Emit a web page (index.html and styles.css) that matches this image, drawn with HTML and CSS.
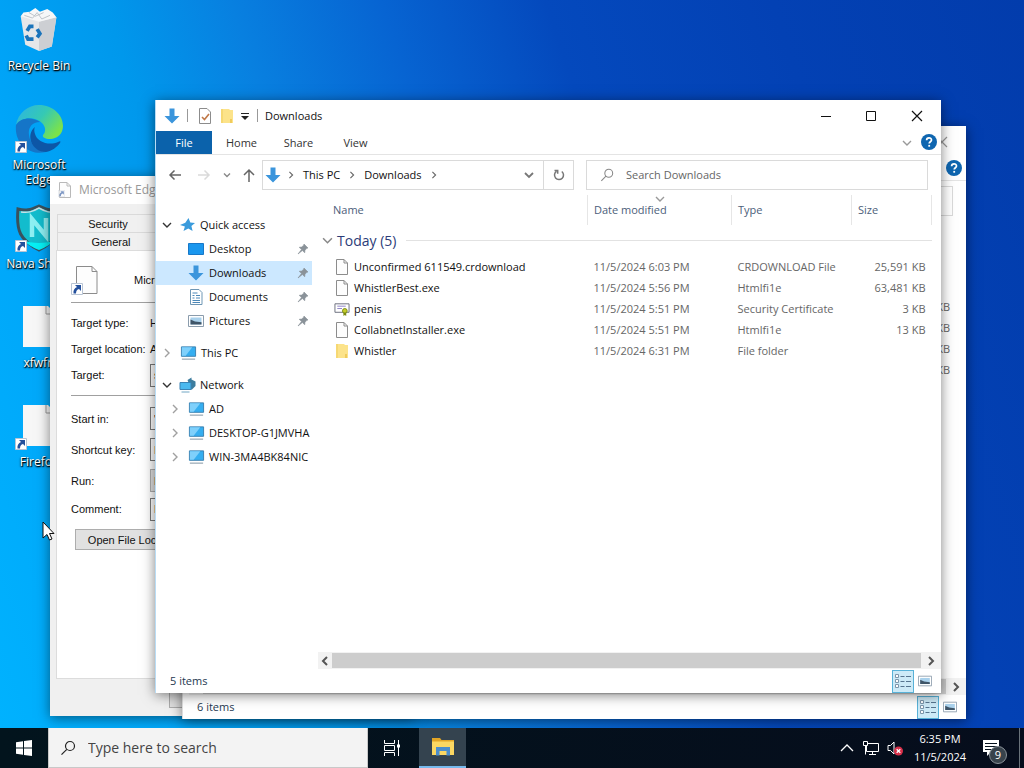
FILE: index.html
```html
<!DOCTYPE html>
<html lang="en">
<head>
<meta charset="utf-8">
<title>Desktop</title>
<link rel="stylesheet" href="styles.css">
</head>
<body>
<svg class="sprite" aria-hidden="true">
  <symbol id="i-down" viewBox="0 0 16 16"><path d="M5.5 0.5h5v7.5h5L8 15.5 0.5 8h5z" fill="#3b95dc"/></symbol>
  <symbol id="i-pc" viewBox="0 0 18 16"><path d="M1.5 1.5h15v10h-15z" fill="#35aef0" stroke="#3a7fae"/><path d="M2 2h11L6 11H2z" fill="#7fd0fb"/><path d="M2 14.500h14" stroke="#7a8f9e"/></symbol>
  <symbol id="i-file" viewBox="0 0 14 16"><path d="M1.500 .5h7.500l3.500 3.500v11.500h-11z" fill="#fdfdfd" stroke="#8c8c8c"/><path d="M9 .5v3.500h3.500" fill="none" stroke="#8c8c8c"/></symbol>
  <symbol id="i-bigfile" viewBox="0 0 24 28"><path d="M1.500 .5h15.500l5 5v22h-20.500z" fill="#fdfdfd" stroke="#8c8c8c"/><path d="M17 .5v5h5" fill="none" stroke="#8c8c8c"/></symbol>
  <symbol id="i-folder" viewBox="0 0 14 16"><path d="M1 1h8l1 1h3v13H1z" fill="#fce38a"/><path d="M1 1h2v14H1z" fill="#f6d873"/><path d="M10 11h2v4h-2z" fill="#f0cb5c"/></symbol>
  <symbol id="i-cert" viewBox="0 0 17 16"><path d="M1 2.500h15v9H1z" fill="#fff" stroke="#666b7a"/><path d="M3.500 5h9M3.500 7.500h5" stroke="#8c7fc4"/><circle cx="11.500" cy="10" r="2.500" fill="#c4cc28" stroke="#7a8a12"/><path d="M10 12v3.500l1.500-1 1.500 1V12" fill="#7a8a12"/></symbol>
  <symbol id="i-chev-r" viewBox="0 0 8 10"><path d="M2 1l4 4-4 4" fill="none" stroke="currentColor" stroke-width="1.400"/></symbol>
  <symbol id="i-chev-rb" viewBox="0 0 8 10"><path d="M2 1l4 4-4 4" fill="none" stroke="currentColor" stroke-width="2"/></symbol>
  <symbol id="i-chev-d" viewBox="0 0 10 8"><path d="M1 2l4 4 4-4" fill="none" stroke="currentColor" stroke-width="1.400"/></symbol>
  <symbol id="i-pin" viewBox="0 0 12 12"><path d="M7 1l4 4-1.200.3L8 7.300l-.3 2.500L5.400 7.500 1 11l3.500-4.400L2.200 4.300 4.700 4l2-1.800z" fill="#8a9299" stroke="#8a9299" stroke-width=".6"/></symbol>
  <symbol id="i-search" viewBox="0 0 16 16"><circle cx="10" cy="6" r="4.500" fill="none" stroke="currentColor" stroke-width="1.200"/><path d="M6.800 9.300L1.500 14.600" stroke="currentColor" stroke-width="1.200"/></symbol>
  <symbol id="i-help" viewBox="0 0 16 16"><circle cx="8" cy="8" r="8" fill="#0f66b0"/><path d="M5.600 6.200c0-3.200 4.900-3.100 4.900-.3 0 1.800-2.300 1.900-2.300 3.700" fill="none" stroke="#fff" stroke-width="1.700"/><path d="M7.300 10.900H9.100v1.800H7.300z" fill="#fff"/></symbol>
  <symbol id="i-pic" viewBox="0 0 16 14"><path d="M.5 1.500h15v11H.5z" fill="#fff" stroke="#8b9cac"/><path d="M2.500 3.500h11v7h-11z" fill="#a9d1ec"/><path d="M2.500 10.500V5.500l4.500 2 6.500.8v2.200z" fill="#3f5568"/></symbol>
  <symbol id="i-details" viewBox="0 0 16 16"><path d="M.5 1.500h3v3h-3zM.5 6.500h3v3h-3zM.5 11.500h3v3h-3z" fill="#fff" stroke="#7d96ab"/><path d="M5.500 3.500h4M11 3.500h5M5.500 8.500h4M11 8.500h5M5.500 13.500h4M11 13.500h5" stroke="#57758f"/></symbol>
  <symbol id="i-shortcut" viewBox="0 0 12 12"><path d="M.5.5h11v11H.5z" fill="#fff" stroke="#b8c4d4"/><path d="M4 2h6v6L8 6C6 6.500 5 8 5 10.500H2.500C2 7.500 3.500 5 6 4z" fill="#24509c"/></symbol>
  <symbol id="i-x" viewBox="0 0 12 12"><path d="M1 1l10 10M11 1L1 11" stroke="currentColor" stroke-width="1.200"/></symbol>
</svg>

<main class="desktop">
  <nav class="shortcuts" aria-label="Desktop shortcuts">
    <button class="shortcut">
      <svg class="shortcut-icon" viewBox="0 0 48 48"><path d="M4 9l20-5 19 6-5 32-14 5-15-7z" fill="#e6e7e9"/><path d="M24 15l19-5-5 32-14 5z" fill="#cdcfd3"/><path d="M4 9l20 6 19-5-4-5-6-4-8 3-5-4-6 4-7 1z" fill="#f6f7f8"/><path d="M8 8l9 3 5-6 5 7 9-4M13 5l7 4 9-4" fill="none" stroke="#b9bfc5"/><path d="M11 25l3-5h4M22 23l3 5-3 4M18 34h-6l-2-4" fill="none" stroke="#1b74bb" stroke-width="4"/></svg>
      <span>Recycle Bin</span>
    </button>
    <button class="shortcut">
      <svg class="shortcut-icon" viewBox="0 0 48 48">
        <defs><linearGradient id="edge-a" x1="0" x2="1" y2=".6"><stop offset="0" stop-color="#2cb3e6"/><stop offset=".55" stop-color="#35c9b4"/><stop offset="1" stop-color="#7be24b"/></linearGradient></defs>
        <path d="M1 20C3 8 13 0 24 0c14 0 24 10 24 21 0 8-6 13-13 13-5 0-8-2-7-4 3-3 3-8-1-12-7-7-21-6-26 2z" fill="url(#edge-a)"/>
        <path d="M1 20c5-8 17-8 24-3-9 0-12 7-11 13 1 9 8 16 17 17-16 4-32-8-30-27z" fill="#1575c8"/>
        <path d="M20 22c-10 8-3 25 11 25 6-1 11-5 14-9 1-2 0-2-2-1-9 4-21 0-23-8-1-3-1-5 0-7z" fill="#0d56a6"/>
      </svg>
      <svg class="overlay"><use href="#i-shortcut"/></svg>
      <span>Microsoft Edge</span>
    </button>
    <button class="shortcut">
      <svg class="shortcut-icon" viewBox="0 0 48 48"><path d="M3 5c8 2 12 1 21-3 9 4 13 5 21 3 2 22-2 31-21 41C5 36 1 27 3 5z" fill="#12bccd" stroke="#39515c" stroke-width="3"/><path d="M6 8c7 1 11 0 18-4 7 4 11 5 18 4" fill="none" stroke="#c6e3e8" stroke-width="1.500"/><path d="M8 36c5 5 9 7 16 10 7-3 11-5 16-10-9 4-23 4-32 0z" fill="#06f0f4"/><path d="M17 33V15l14 17V14" fill="none" stroke="#8deff2" stroke-width="4.500"/></svg>
      <svg class="overlay"><use href="#i-shortcut"/></svg>
      <span>Nava Shield</span>
    </button>
    <button class="shortcut">
      <svg class="shortcut-icon" viewBox="0 0 48 48"><path d="M8 3h25l7 7v34H8z" fill="#f7f7f7"/><path d="M31 3v8h8" fill="none" stroke="#999"/></svg>
      <span>xfwfn</span>
    </button>
    <button class="shortcut">
      <svg class="shortcut-icon" viewBox="0 0 48 48"><path d="M8 3h25l7 7v34H8z" fill="#f7f7f7"/><path d="M31 3v8h8" fill="none" stroke="#999"/></svg>
      <svg class="overlay"><use href="#i-shortcut"/></svg>
      <span>Firefox</span>
    </button>
  </nav>

  <section class="window dialog" aria-label="Microsoft Edge Properties">
    <header class="dialog-title"><svg class="ic16"><use href="#i-file"/></svg><svg class="mini"><use href="#i-shortcut"/></svg><span>Microsoft Edge Properties</span></header>
    <div class="tabs"><button>Security</button><button>Details</button></div>
    <div class="tabs"><button>General</button><button>Shortcut</button></div>
    <form class="sheet">
      <div class="sheet-head"><svg class="big-file"><use href="#i-bigfile"/></svg><svg class="overlay"><use href="#i-shortcut"/></svg><span>Microsoft Edge</span></div>
      <div class="field"><span>Target type:</span><span>HTML</span></div>
      <div class="field"><span>Target location:</span><span>Application</span></div>
      <div class="field"><label for="f1">Target:</label><input id="f1" value="sheet"></div>
      <hr>
      <div class="field gap"><label for="f2">Start in:</label><input id="f2" value="&quot;C:\"></div>
      <div class="field gap"><label for="f3">Shortcut key:</label><input id="f3" value="None"></div>
      <div class="field gap"><label for="f4">Run:</label><select id="f4"><option>Normal window</option></select></div>
      <div class="field"><label for="f5">Comment:</label><input id="f5" value="Browse the web"></div>
      <button type="button" class="classic">Open File Location</button>
    </form>
    <footer class="dialog-foot"><button class="classic">OK</button></footer>
  </section>

  <section class="window explorer back" aria-label="File Explorer">
    <header class="titlebar"><span class="grow"></span><button class="cap" aria-label="Close"><svg><use href="#i-x"/></svg></button></header>
    <div class="ribbon"><span class="grow"></span><button class="help" aria-label="Help"><svg><use href="#i-help"/></svg></button></div>
    <div class="address-row"><span></span><span></span><input class="search-box" aria-label="Search"></div>
    <div class="body">
      <div class="list">
        <table class="back-table">
          <tbody>
            <tr><td>1 KB</td></tr><tr><td>1 KB</td></tr><tr><td>1 KB</td></tr><tr><td>1 KB</td></tr>
          </tbody>
        </table>
        <div class="hscroll"><button aria-label="Scroll left"><svg class="flip"><use href="#i-chev-rb"/></svg></button><div class="thumb"></div><button aria-label="Scroll right"><svg><use href="#i-chev-rb"/></svg></button></div>
      </div>
    </div>
    <footer class="status"><span>6 items</span><span class="grow"></span><button class="view on" aria-label="Details"><svg><use href="#i-details"/></svg></button><button class="view" aria-label="Large icons"><svg><use href="#i-pic"/></svg></button></footer>
  </section>

  <section class="window explorer front" aria-label="Downloads">
    <header class="titlebar">
      <svg class="ic16"><use href="#i-down"/></svg><i class="bar"></i>
      <button class="quick" aria-label="Properties"><svg class="ic16" viewBox="0 0 14 16"><path d="M1.500.5H9L12.500 4v11.500h-11z" fill="#fff" stroke="#8c8c8c"/><path d="M4 9l2.500 2.500L11 6" fill="none" stroke="#c07848" stroke-width="1.600"/></svg></button>
      <button class="quick" aria-label="New folder"><svg class="ic16"><use href="#i-folder"/></svg></button>
      <button class="drop" aria-label="Customize"><svg viewBox="0 0 8 8"><path d="M0 1.500h8" stroke="#222"/><path d="M0 4h8L4 8z" fill="#222"/></svg></button>
      <i class="bar"></i>
      <h1>Downloads</h1>
      <span class="grow"></span>
      <button class="cap" aria-label="Minimize"><svg viewBox="0 0 12 12"><path d="M1 6.500h10" stroke="#111"/></svg></button>
      <button class="cap" aria-label="Maximize"><svg viewBox="0 0 12 12"><path d="M1.500 1.500h9v9h-9z" fill="none" stroke="#111"/></svg></button>
      <button class="cap" aria-label="Close"><svg><use href="#i-x"/></svg></button>
    </header>
    <div class="ribbon">
      <button class="tab file">File</button><button class="tab">Home</button><button class="tab">Share</button><button class="tab">View</button>
      <span class="grow"></span>
      <button class="expand" aria-label="Expand ribbon"><svg><use href="#i-chev-d"/></svg></button>
      <button class="help" aria-label="Help"><svg><use href="#i-help"/></svg></button>
    </div>
    <div class="address-row">
      <div class="nav-buttons">
        <button aria-label="Back"><svg viewBox="0 0 14 14"><path d="M13 7H2M6.500 2.500L2 7l4.500 4.500" fill="none" stroke="#666" stroke-width="1.500"/></svg></button>
        <button aria-label="Forward" disabled><svg viewBox="0 0 14 14"><path d="M1 7h11M7.500 2.500L12 7l-4.500 4.500" fill="none" stroke="#dadada" stroke-width="1.500"/></svg></button>
        <button class="recent" aria-label="Recent"><svg viewBox="0 0 10 8"><path d="M2 2.500l3 3 3-3" fill="none" stroke="#888" stroke-width="1.400"/></svg></button>
        <button aria-label="Up"><svg viewBox="0 0 14 14"><path d="M7 14V2M2 7l5-5 5 5" fill="none" stroke="#666" stroke-width="1.500"/></svg></button>
      </div>
      <div class="address">
        <svg class="ic16"><use href="#i-down"/></svg>
        <svg class="sep"><use href="#i-chev-r"/></svg><a href="#pc">This PC</a>
        <svg class="sep"><use href="#i-chev-r"/></svg><a href="#downloads">Downloads</a>
        <svg class="sep"><use href="#i-chev-r"/></svg><span class="grow"></span>
        <button class="hist" aria-label="Previous locations"><svg viewBox="0 0 10 8"><path d="M1 2l4 4 4-4" fill="none" stroke="#777" stroke-width="1.800"/></svg></button>
        <button class="refresh" aria-label="Refresh"><svg viewBox="0 0 12 12"><path d="M8.800 2.500A4.500 4.500 0 1 1 3.500 2.300M1.500 1.500h3.200v3.200" fill="none" stroke="#777" stroke-width="1.500"/></svg></button>
      </div>
      <label class="search-box"><svg><use href="#i-search"/></svg><input type="text" placeholder="Search Downloads" aria-label="Search Downloads"></label>
    </div>
    <div class="body">
      <nav class="tree" aria-label="Folders">
        <ul>
          <li><a href="#q" class="root"><svg class="tw dark"><use href="#i-chev-d"/></svg><svg class="ic16" viewBox="0 0 16 16"><path d="M9 1l1.800 4.500 4.700.4-3.600 3.200 1.200 5L8.800 11.500 4 14l1.400-4.600L.5 8l5.300-2.200z" fill="#3a9bdc"/></svg>Quick access</a></li>
          <li><a href="#a" class="leaf"><svg class="ic16" viewBox="0 0 16 16"><path d="M.5 2.500h15v11H.5z" fill="#1a97ee" stroke="#1878c8"/></svg><span>Desktop</span><svg class="pin"><use href="#i-pin"/></svg></a></li>
          <li><a href="#b" class="leaf on"><svg class="ic16"><use href="#i-down"/></svg><span>Downloads</span><svg class="pin"><use href="#i-pin"/></svg></a></li>
          <li><a href="#c" class="leaf"><svg class="ic16" viewBox="0 0 16 16"><path d="M2.500.5h8.500l3 3v12H2.500z" fill="#fff" stroke="#6f97b5"/><path d="M4.500 4h5M4.500 6.500h2M8 6.500h4M4.500 9h2M8 9h4M4.500 11.500h7.500M4.500 13.500h7.500" stroke="#4c88b8"/></svg><span>Documents</span><svg class="pin"><use href="#i-pin"/></svg></a></li>
          <li><a href="#d" class="leaf"><svg class="ic16"><use href="#i-pic"/></svg><span>Pictures</span><svg class="pin"><use href="#i-pin"/></svg></a></li>
        </ul>
        <ul><li><a href="#e" class="root"><svg class="tw"><use href="#i-chev-r"/></svg><svg class="ic16"><use href="#i-pc"/></svg>This PC</a></li></ul>
        <ul>
          <li><a href="#f" class="root"><svg class="tw dark"><use href="#i-chev-d"/></svg><svg class="ic16" viewBox="0 0 16 16"><path d="M8 3l4-2.500V2.500l4 2V9l-4 4z" fill="#3d7d9e"/><path d="M.5 5.500h11v7H.5z" fill="#4ab9ef" stroke="#3a83b4"/><path d="M2 15h8" stroke="#71a6c4"/></svg>Network</a></li>
          <li><a href="#g" class="root sub"><svg class="tw"><use href="#i-chev-r"/></svg><svg class="ic16"><use href="#i-pc"/></svg>AD</a></li>
          <li><a href="#h" class="root sub"><svg class="tw"><use href="#i-chev-r"/></svg><svg class="ic16"><use href="#i-pc"/></svg>DESKTOP-G1JMVHA</a></li>
          <li><a href="#i" class="root sub"><svg class="tw"><use href="#i-chev-r"/></svg><svg class="ic16"><use href="#i-pc"/></svg>WIN-3MA4BK84NIC</a></li>
        </ul>
      </nav>
      <div class="list">
        <table class="files">
          <colgroup><col><col class="c-date"><col class="c-type"><col class="c-size"></colgroup>
          <thead><tr><th>Name</th><th>Date modified<svg class="sort"><use href="#i-chev-d"/></svg></th><th>Type</th><th>Size</th></tr></thead>
          <tbody>
            <tr class="group"><th colspan="4"><div><svg><use href="#i-chev-d"/></svg><span>Today (5)</span><i></i></div></th></tr>
            <tr><td><svg class="ic16"><use href="#i-file"/></svg>Unconfirmed 611549.crdownload</td><td>11/5/2024 6:03 PM</td><td>CRDOWNLOAD File</td><td>25,591 KB</td></tr>
            <tr><td><svg class="ic16"><use href="#i-file"/></svg>WhistlerBest.exe</td><td>11/5/2024 5:56 PM</td><td>Htmlfi1e</td><td>63,481 KB</td></tr>
            <tr><td><svg class="ic16"><use href="#i-cert"/></svg>penis</td><td>11/5/2024 5:51 PM</td><td>Security Certificate</td><td>3 KB</td></tr>
            <tr><td><svg class="ic16"><use href="#i-file"/></svg>CollabnetInstaller.exe</td><td>11/5/2024 5:51 PM</td><td>Htmlfi1e</td><td>13 KB</td></tr>
            <tr><td><svg class="ic16"><use href="#i-folder"/></svg>Whistler</td><td>11/5/2024 6:31 PM</td><td>File folder</td><td></td></tr>
          </tbody>
        </table>
        <div class="hscroll"><button aria-label="Scroll left"><svg class="flip"><use href="#i-chev-rb"/></svg></button><div class="thumb"></div><button aria-label="Scroll right"><svg><use href="#i-chev-rb"/></svg></button></div>
      </div>
    </div>
    <footer class="status"><span>5 items</span><span class="grow"></span><button class="view on" aria-label="Details"><svg><use href="#i-details"/></svg></button><button class="view" aria-label="Large icons"><svg><use href="#i-pic"/></svg></button></footer>
  </section>

  <svg class="cursor" viewBox="0 0 13 20"><path d="M1 1v16l4-3.500L7.500 19l2.500-1-2.500-5.500H12z" fill="#fff" stroke="#111"/></svg>
</main>

<footer class="taskbar">
  <button class="start" aria-label="Start"><svg viewBox="0 0 16 16"><path d="M0 2.200L7 1.200v6.300H0zM8 1.100L16 0v7.500H8zM0 8.500h7v6.300l-7-1zM8 8.500h8V16l-8-1.100z" fill="#fff"/></svg></button>
  <label class="task-search"><svg><use href="#i-search"/></svg><input type="text" placeholder="Type here to search" aria-label="Type here to search"></label>
  <button class="task" aria-label="Task view"><svg viewBox="0 0 18 18"><path d="M1.500 1v3.500h10V1M1.500 6.500h10v5h-10zM1.500 17v-3.500h10V17M15.500 1v16" fill="none" stroke="#fff"/><path d="M14 5.500h3v3h-3z" fill="#fff"/></svg></button>
  <button class="task active" aria-label="File Explorer"><svg class="explorer-icon" viewBox="0 0 22 18"><path d="M0 0h8l1.500 2H22v5H0z" fill="#e2a526"/><path d="M0 3.500h22V17H0z" fill="#fbd762"/><path d="M4 9h14v8.500h-3.500V13h-7v4.500H4z" fill="#4b8dcb"/></svg></button>
  <span class="grow"></span>
  <div class="tray">
    <button aria-label="Show hidden icons"><svg viewBox="0 0 16 16"><path d="M2 11l6-6 6 6" fill="none" stroke="#fff" stroke-width="1.300"/></svg></button>
    <button aria-label="Network"><svg viewBox="0 0 16 16"><path d="M4 3.500h11.500v8H3.500V6M9.500 11.500v3M6 14.500h7M.5 1.500h4v4h-4zM2.500 5.500v9" fill="none" stroke="#fff"/></svg></button>
    <button class="vol" aria-label="Volume muted"><svg viewBox="0 0 16 16"><path d="M1 5.500h2.500L7 2v12L3.500 10.500H1z" fill="none" stroke="#fff"/><circle cx="11.500" cy="11" r="4.500" fill="#d8304a"/><path d="M9.700 9.200l3.600 3.600M13.300 9.200l-3.600 3.600" stroke="#fff" stroke-width="1.300"/></svg></button>
  </div>
  <time class="clock"><span>6:35 PM</span><span>11/5/2024</span></time>
  <button class="notify" aria-label="Notifications"><svg viewBox="0 0 18 18"><path d="M1 1h16v12H9l-4 4v-4H1z" fill="#fff"/><path d="M3 4.500h12M3 7.500h12M3 10.500h7" stroke="#06121e"/></svg><span class="badge">9</span></button>
  <i class="peek"></i>
</footer>
</body>
</html>
```

FILE: styles.css
```css
* { box-sizing: border-box; }
html, body { height: 100%; }
body {
  margin: 0;
  display: flex;
  flex-direction: column;
  overflow: hidden;
  font: 11px/16px "Open Sans", "Noto Sans", sans-serif;
  color: #111;
}
button, input, select { font: inherit; color: inherit; border: 0; background: none; padding: 0; margin: 0; border-radius: 0; }
svg { display: block; flex: none; }
a { color: inherit; text-decoration: none; }
ul { list-style: none; margin: 0; padding: 0; }
.sprite { position: absolute; width: 0; height: 0; }
.grow { flex: 1; }
.ic16 { width: 16px; height: 16px; }

.desktop {
  position: relative;
  flex: 1;
  min-height: 0;
  overflow: hidden;
  background: linear-gradient(72deg, #00b2fe 0%, #00a6f9 15%, #0098ec 27%, #0880e0 37%, #0764d2 49%, #0449bd 62%, #0341b4 80%, #023cac 100%);
}

.shortcuts { display: flex; flex-direction: column; width: 78px; padding-top: 6px; }
.shortcut { position: relative; height: 99px; display: flex; flex-direction: column; align-items: center; gap: 4px; color: #fff; font-size: 12px; line-height: 15px; text-shadow: 1px 1px 1px #000, 0 1px 2px #000; }
.shortcut-icon { width: 48px; height: 48px; }
.overlay { position: absolute; left: 15px; top: 36px; width: 12px; height: 12px; }
.shortcut:first-child .shortcut-icon { width: 44px; }

.window { position: absolute; display: flex; flex-direction: column; background: #fff; box-shadow: 0 2px 12px rgba(0, 0, 0, .5); }
.front { inset: 100px 83px 35px 155px; }
.back { inset: 126px 58px 9px 182px; }

/* Properties dialog */
.dialog { left: 50px; top: 176px; bottom: 12px; width: 364px; padding: 0 6px; background: #f0f0f0; font: 11px/14px "Liberation Sans", Arial, sans-serif; }
.dialog-title { position: relative; display: flex; align-items: center; gap: 6px; height: 28px; margin: 0 -6px 10px; padding-left: 7px; background: #fff; color: #999; font: 12px/16px "Open Sans", sans-serif; }
.dialog-title svg { opacity: .6; }
.mini { position: absolute; left: 8px; top: 14px; width: 7px; height: 7px; }
.tabs { display: flex; height: 18px; padding-left: 1px; }
.tabs button { width: 102px; border: 1px solid #dadada; border-bottom: 0; padding-left: 0; }
.tabs + .tabs button { width: 108px; }
.sheet { flex: 1; display: flex; flex-direction: column; background: #fff; border: 1px solid #dcdcdc; padding: 10px 14px; }
.sheet-head { position: relative; display: flex; align-items: center; height: 42px; padding-bottom: 4px; margin-bottom: 7px; border-bottom: 1px solid #a0a0a0; }
.sheet-head span { margin-left: 35px; }
.sheet-head .overlay { left: 0; top: 22px; }
.big-file { width: 24px; height: 28px; margin-left: 4px; }
.field { display: flex; align-items: center; height: 26px; }
.field > :first-child { width: 79px; flex: none; }
.field input, .field select { width: 200px; height: 23px; border: 1px solid #7a7a7a; padding: 0 3px; }
.field select { background: #e1e1e1; border-color: #adadad; appearance: none; }
.sheet hr { width: 100%; margin: 7px 0; border: 0; border-top: 1px solid #a0a0a0; }
.field.gap { height: 31px; }
.classic { height: 21px; border: 1px solid #adadad; background: #e1e1e1; }
.sheet .classic { width: 118px; margin: 7px 0 0 4px; }
.dialog-foot { display: flex; height: 37px; padding: 8px 0 8px 113px; }
.dialog-foot .classic { width: 75px; }

/* Explorer window */
.explorer { border-left: 1px solid #b8dcf5; }
.back { border-left-color: #dcdcdc; }
.titlebar { display: flex; align-items: center; height: 31px; padding-left: 8px; }
.titlebar h1 { font: inherit; margin: 0 0 0 7px; }
.bar { width: 1px; height: 13px; background: #999; }
.titlebar .ic16 + .bar { margin: 0 9px 0 7px; }
.quick { margin-right: 6px; }
.drop { margin-right: 8px; }
.drop svg { width: 8px; height: 8px; }
.cap { display: flex; align-items: center; justify-content: center; width: 45px; height: 30px; }
.cap svg { width: 12px; height: 12px; }
.titlebar .cap:last-child { width: 48px; }
.back .cap { color: #999; }
.ribbon { display: flex; align-items: center; height: 24px; border-bottom: 1px solid #e4e4e4; }
.tab { width: 57px; height: 23px; color: #333; }
.tab.file { width: 56px; margin-right: 1px; background: #0b62ab; color: #fff; }
.expand svg { width: 10px; height: 8px; color: #999; }
.help { margin: 0 4px 1px 9px; }
.help svg { width: 16px; height: 16px; }

.address-row { display: grid; grid-template-columns: 94px 324fr 342fr; height: 40px; padding: 5px 13px 5px 12px; }
.nav-buttons { display: flex; align-items: center; gap: 15px; }
.nav-buttons svg { width: 14px; height: 14px; }
.nav-buttons .recent { margin: 0 -5px 0 -4px; }
.nav-buttons .recent svg { width: 10px; height: 8px; }
.address { display: flex; align-items: center; border: 1px solid #dadada; padding-left: 2px; margin-right: 12px; }
.sep { width: 8px; height: 8px; color: #666; margin: 0 8px; }
.address .ic16 { margin-right: -2px; }
.hist { margin-right: 9px; }
.hist svg { width: 10px; height: 8px; }
.refresh { align-self: stretch; width: 30px; border-left: 1px solid #dadada; display: flex; align-items: center; justify-content: center; }
.refresh svg { width: 12px; height: 12px; }
.search-box { min-width: 0; display: flex; align-items: center; gap: 12px; border: 1px solid #dadada; padding-left: 13px; color: #888; }
.search-box svg { width: 14px; height: 14px; }
.search-box input { flex: 1; min-width: 0; }
input::placeholder { color: #666; opacity: 1; }

.body { flex: 1; min-height: 0; display: flex; }
.tree { width: 156px; flex: none; display: flex; flex-direction: column; gap: 8px; padding-top: 18px; overflow: hidden; }
.tree a { display: flex; align-items: center; height: 24px; white-space: nowrap; }
.tw { width: 8px; height: 10px; margin: 0 13px 0 7px; color: #a0a0a0; }
.tw.dark { color: #333; width: 10px; margin: 0 11px 0 6px; }
.root .ic16 { width: 17px; margin-left: -4px; margin-right: 4px; }
.sub { padding-left: 8px; }
.leaf { gap: 5px; padding: 0 3px 0 32px; }
.leaf span { flex: 1; }
.leaf.on { background: #cce8ff; }
.pin { width: 12px; height: 12px; }

.list { flex: 1; min-width: 0; display: flex; flex-direction: column; justify-content: space-between; padding-left: 6px; }
table { border-collapse: collapse; table-layout: fixed; }
.files { width: calc(100% - 11px); margin-left: 2px; }
.c-date { width: 144px; } .c-type { width: 120px; } .c-size { width: 80px; }
.files th { text-align: left; font-weight: 400; color: #4c607a; }
.files thead th { position: relative; height: 30px; padding: 0 6px; border-right: 1px solid #e6e6e6; }
.files thead th:first-child { padding-left: 13px; }
.sort { position: absolute; left: 67px; top: 0; width: 10px; height: 8px; color: #999; }
.files td { height: 21px; padding: 0 6px; color: #666; white-space: nowrap; }
.files td:first-child { display: flex; align-items: center; gap: 4px; padding-left: 14px; color: #111; }
.files td:last-child { text-align: right; }
.group th { padding: 0 0 5px; }
.group div { display: flex; align-items: center; height: 21px; font-size: 14px; line-height: 20px; color: #2c3c78; padding-left: 2px; }
.group svg { width: 11px; height: 9px; color: #888; margin-right: 4px; }
.group i { flex: 1; height: 1px; background: #e2e2e2; margin-left: 10px; }
.files tbody::before { content: ""; display: block; height: 5px; }

.back-table { width: 100%; margin-top: 75px; }
.back-table td { height: 21px; padding: 0 16px 0 0; text-align: right; color: #666; }

.hscroll { display: flex; align-items: center; height: 17px; background: #f2f2f2; }
.hscroll button { width: 14px; height: 17px; display: flex; align-items: center; justify-content: center; color: #555; }
.hscroll button:last-child { width: 20px; }
.hscroll svg { width: 8px; height: 10px; }
.flip { transform: rotate(180deg); }
.thumb { flex: 1; height: 15px; background: #cdcdcd; }

.status { display: flex; align-items: center; height: 24px; padding: 0 5px 0 14px; color: #253850; }
.view { display: flex; align-items: center; justify-content: center; width: 22px; height: 23px; border: 1px solid transparent; }
.view svg { width: 14px; height: 14px; }
.view.on { background: #cdeaf7; border-color: #58b2d8; }
.view.on svg { width: 16px; height: 16px; }

.cursor { position: absolute; left: 42px; top: 521px; width: 13px; height: 20px; }

/* Taskbar */
.taskbar { display: flex; height: 40px; flex: none; background: linear-gradient(90deg, #02141d, #060d1c); color: #fff; }
.taskbar button { display: flex; align-items: center; justify-content: center; }
.start { width: 48px; }
.start svg { width: 16px; height: 16px; }
.task-search { display: flex; align-items: center; gap: 12px; flex: 0 1 320px; padding-left: 11px; border: 1px solid #c8c8c8; border-top: 0; background: #f3f3f3; color: #222; font-size: 14px; line-height: 20px; }
.task-search svg { width: 16px; height: 16px; }
.task-search input { flex: 1; min-width: 0; }
.task-search input::placeholder { color: #444; }
.task { width: 48px; }
.task svg { width: 18px; height: 18px; }
.taskbar .active { background: #34434f; border-bottom: 2px solid #76b9ed; margin-left: 3px; width: 47px; }
.active .explorer-icon { width: 22px; }
.tray { display: flex; align-items: center; gap: 8px; }
.tray svg { width: 16px; height: 16px; }
.clock { display: flex; flex-direction: column; align-items: center; justify-content: center; width: 74px; line-height: 18px; }
.taskbar .notify { position: relative; width: 42px; padding-right: 14px; }
.notify svg { width: 18px; height: 18px; }
.badge { position: absolute; right: 12px; bottom: 4px; width: 18px; height: 18px; border-radius: 50%; border: 1px solid #8a9299; background: #38434c; line-height: 16px; text-align: center; }
.peek { width: 5px; border-left: 1px solid #69727a; }
```
